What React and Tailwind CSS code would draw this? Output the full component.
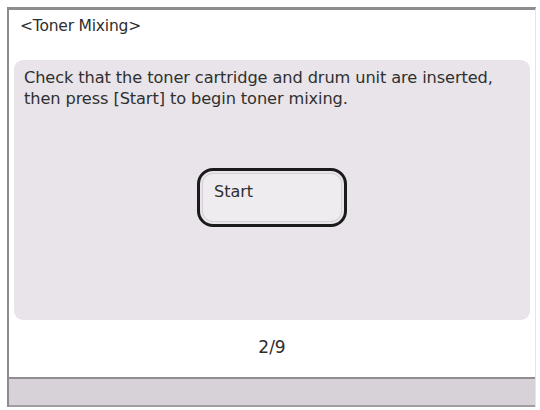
import React from 'react';

export default function App() {
  return (
    <div className="w-[540px] h-[410px] bg-white overflow-hidden" style={{ fontFamily: '"DejaVu Sans", sans-serif' }}>
      <div className="ml-[7px] mt-[7px] mr-[4px] h-[400px] border-l-2 border-t-[3px] border-r border-[#8e8c8f] border-r-[#e6e4e7] flex flex-col">
        <div className="h-[50px] pl-[11px] pt-[5px] text-[15.5px] text-[#2e2e2e] tracking-[-0.2px]">&lt;Toner Mixing&gt;</div>
        <div className="mx-[5px] h-[260px] rounded-[9px] bg-[#e8e4e9] pt-[7px] flex flex-col">
          <p className="pl-[10px] text-[16.2px] leading-[21px] text-[#303030] tracking-[-0.1px]">
            Check that the toner cartridge and drum unit are inserted,
            <br />
            then press [Start] to begin toner mixing.
          </p>
          <div className="flex justify-center mt-[59px]">
            <button className="w-[150px] h-[59px] rounded-[16px] border-[3px] border-[#1a1a1a] p-[2px]">
              <div className="w-full h-full rounded-[11px] bg-[#efecf0] border border-[#d3cfd4] text-left pl-[11px] pt-[6px] text-[16px] text-[#2e2e2e]">
                Start
              </div>
            </button>
          </div>
        </div>
        <div className="h-[57px] flex items-center justify-center text-[17px] text-[#2e2e2e] pb-[2px]">2/9</div>
        <div className="h-[30px] bg-[#d6d2d7] border-t-2 border-b-2 border-t-[#8f8d90] border-b-[#a09ea1]"></div>
      </div>
    </div>
  );
}
